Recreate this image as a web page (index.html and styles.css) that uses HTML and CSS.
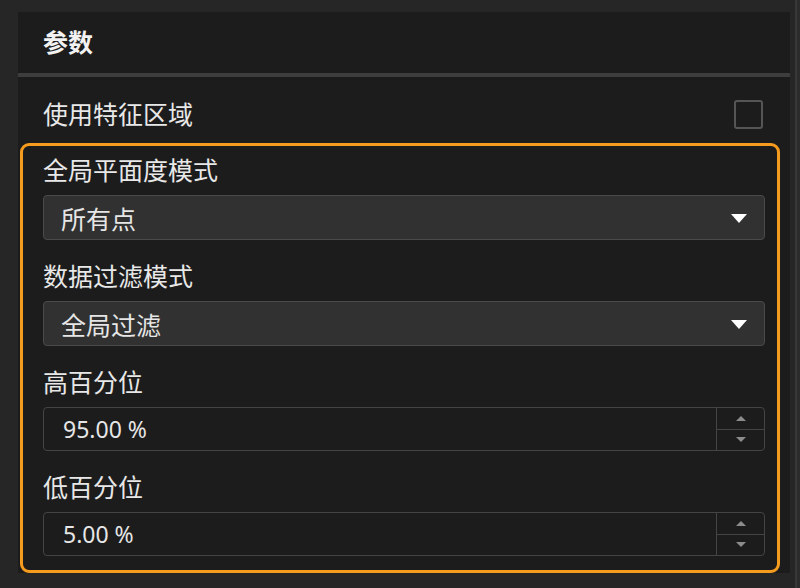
FILE: index.html
```html
<!DOCTYPE html>
<html lang="zh-CN">

<head>
    <meta charset="UTF-8">
    <meta name="viewport" content="width=device-width, initial-scale=1.0">
    <title>参数</title>
    <link rel="stylesheet" href="styles.css">
</head>

<body>
    <div class="panel">
        <div class="panel-header">参数</div>

        <div class="check-row">
            <span class="label">使用特征区域</span>
            <span class="checkbox"></span>
        </div>

        <div class="highlight-box">
            <div class="field-group">
                <div class="label">全局平面度模式</div>
                <div class="select">
                    <span>所有点</span>
                    <span class="select-arrow"></span>
                </div>
            </div>

            <div class="field-group">
                <div class="label">数据过滤模式</div>
                <div class="select">
                    <span>全局过滤</span>
                    <span class="select-arrow"></span>
                </div>
            </div>

            <div class="field-group">
                <div class="label">高百分位</div>
                <div class="spinbox">
                    <span class="spin-value">95.00 %</span>
                    <div class="spin-buttons">
                        <span class="spin-btn"><i class="arrow-up"></i></span>
                        <span class="spin-btn"><i class="arrow-down"></i></span>
                    </div>
                </div>
            </div>

            <div class="field-group">
                <div class="label">低百分位</div>
                <div class="spinbox">
                    <span class="spin-value">5.00 %</span>
                    <div class="spin-buttons">
                        <span class="spin-btn"><i class="arrow-up"></i></span>
                        <span class="spin-btn"><i class="arrow-down"></i></span>
                    </div>
                </div>
            </div>
        </div>
    </div>
    <div class="scrollbar"></div>
</body>
</html>
```

FILE: styles.css
```css
body {
    font-family: "Noto Sans", "Noto Sans CJK SC", sans-serif;
    background-color: #262626;
    color: #e8e8e8;
    margin: 0;
    padding: 0;
    width: 800px;
    height: 588px;
    overflow: hidden;
    display: flex;
    align-items: flex-start;
}

.panel {
    margin-left: 18px;
    margin-top: 12px;
    width: 772px;
    background-color: #1c1c1c;
}

.panel-header {
    height: 61px;
    line-height: 61px;
    padding-left: 25px;
    font-size: 25px;
    font-weight: bold;
    color: #f2f2f2;
    border-bottom: 4px solid #3d3d3d;
}

.label {
    font-size: 25px;
    line-height: 30px;
    color: #e8e8e8;
}

.check-row {
    display: flex;
    align-items: center;
    justify-content: space-between;
    height: 30px;
    margin-top: 22px;
    padding-left: 25px;
    padding-right: 27px;
}

.checkbox {
    width: 25px;
    height: 25px;
    border: 2px solid #555555;
    border-radius: 3px;
}

.highlight-box {
    margin-top: 14px;
    margin-left: 2px;
    width: 722px;
    border: 3px solid #f59b1d;
    border-radius: 9px;
    padding: 9px 12px 14px 20px;
    display: flex;
    flex-direction: column;
    gap: 21px;
}

.field-group {
    display: flex;
    flex-direction: column;
    gap: 10px;
}

.select {
    height: 43px;
    background-color: #313131;
    border: 1px solid #4a4a4a;
    border-radius: 4px;
    display: flex;
    align-items: center;
    justify-content: space-between;
    padding: 0 17px 0 17px;
    font-size: 25px;
    color: #e6e6e6;
}

.select-arrow {
    width: 0;
    height: 0;
    border-left: 8px solid transparent;
    border-right: 8px solid transparent;
    border-top: 9px solid #ffffff;
    margin-top: 2px;
}

.spinbox {
    height: 42px;
    border: 1.5px solid #444444;
    border-radius: 4px;
    display: flex;
    align-items: stretch;
}

.spin-value {
    flex: 1;
    display: flex;
    align-items: center;
    padding-left: 19px;
    font-size: 23px;
    color: #e6e6e6;
}

.spin-buttons {
    width: 47px;
    border-left: 1.5px solid #444444;
    display: flex;
    flex-direction: column;
}

.spin-btn {
    flex: 1;
    display: flex;
    align-items: center;
    justify-content: center;
}

.spin-btn + .spin-btn {
    border-top: 1.5px solid #444444;
}

.arrow-up {
    width: 0;
    height: 0;
    border-left: 5px solid transparent;
    border-right: 5px solid transparent;
    border-bottom: 5px solid #8c8c8c;
}

.arrow-down {
    width: 0;
    height: 0;
    border-left: 5px solid transparent;
    border-right: 5px solid transparent;
    border-top: 5px solid #8c8c8c;
}

.scrollbar {
    width: 10px;
    height: 588px;
    background: linear-gradient(to right, #262626 0, #262626 5px, #383838 5px, #383838 7px, #2c2c2c 7px);
}
```
